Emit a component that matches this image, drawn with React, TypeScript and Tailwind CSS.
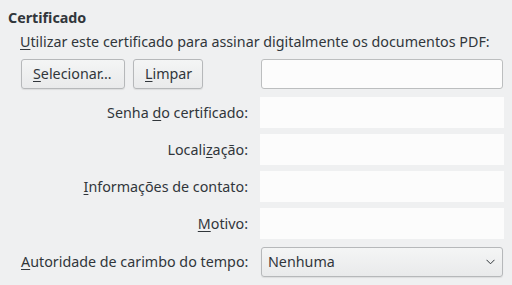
import React from "react";

const font = { fontFamily: '"Noto Sans", "Open Sans", sans-serif' };

function U({ children }: { children: React.ReactNode }) {
  return <span className="underline decoration-1 underline-offset-2">{children}</span>;
}

function Row({ label, children, className = "" }: { label: React.ReactNode; children: React.ReactNode; className?: string }) {
  return (
    <div className={`flex items-center ${className}`}>
      <div className="w-[227px] text-right whitespace-nowrap">{label}</div>
      <div className="ml-[12px] w-[244px]">{children}</div>
    </div>
  );
}

function Field() {
  return <div className="h-[31px] w-[244px] bg-[#fcfcfc]" />;
}

export default function App() {
  return (
    <div className="w-[512px] h-[285px] bg-[#eff0f1] text-[#31363b] text-[14.3px] leading-[20px] overflow-hidden" style={font}>
      <div className="pl-[8px] pt-[8px] font-bold">Certificado</div>
      <div className="pl-[20px] mt-[4px] whitespace-nowrap">
        <U>U</U>tilizar este certificado para assinar digitalmente os documentos PDF:
      </div>
      <div className="flex items-center mt-[7px] pl-[21px]">
        <div className="w-[227px] flex gap-[8px]">
          <button className="h-[30px] w-[104px] rounded-[3px] border border-[#b6b8ba] bg-gradient-to-b from-[#f4f5f5] to-[#e9eaeb] shadow-[0_1px_1px_rgba(0,0,0,0.08)] text-left pl-[11px] whitespace-nowrap">
            <U>S</U>elecionar…
          </button>
          <button className="h-[30px] w-[70px] rounded-[3px] border border-[#b6b8ba] bg-gradient-to-b from-[#f4f5f5] to-[#e9eaeb] shadow-[0_1px_1px_rgba(0,0,0,0.08)] text-left pl-[11px]">
            <U>L</U>impar
          </button>
        </div>
        <div className="ml-[12px] w-[244px] pl-[1px]">
          <div className="h-[30px] w-[242px] rounded-[3px] border border-[#bcbebf] bg-[#fcfcfc]" />
        </div>
      </div>
      <div className="pl-[21px]">
        <Row label={<>Senha <U>d</U>o certificado:</>} className="mt-[8px]"><Field /></Row>
        <Row label={<>Locali<U>z</U>ação:</>} className="mt-[6px]"><Field /></Row>
        <Row label={<><U>I</U>nformações de contato:</>} className="mt-[6px]"><Field /></Row>
        <Row label={<><U>M</U>otivo:</>} className="mt-[6px]"><Field /></Row>
        <Row label={<><U>A</U>utoridade de carimbo do tempo:</>} className="mt-[8px]">
          <div className="pl-[1px]">
            <div className="h-[30px] w-[242px] rounded-[3px] border border-[#b6b8ba] bg-gradient-to-b from-[#f4f5f5] to-[#e9eaeb] shadow-[0_1px_1px_rgba(0,0,0,0.08)] flex items-center justify-between pl-[6px] pr-[7px]">
              <span>Nenhuma</span>
              <svg width="9" height="6" viewBox="0 0 9 6" fill="none">
                <path d="M0.5 0.8 L4.5 4.8 L8.5 0.8" stroke="#31363b" strokeWidth="1" />
              </svg>
            </div>
          </div>
        </Row>
      </div>
    </div>
  );
}
